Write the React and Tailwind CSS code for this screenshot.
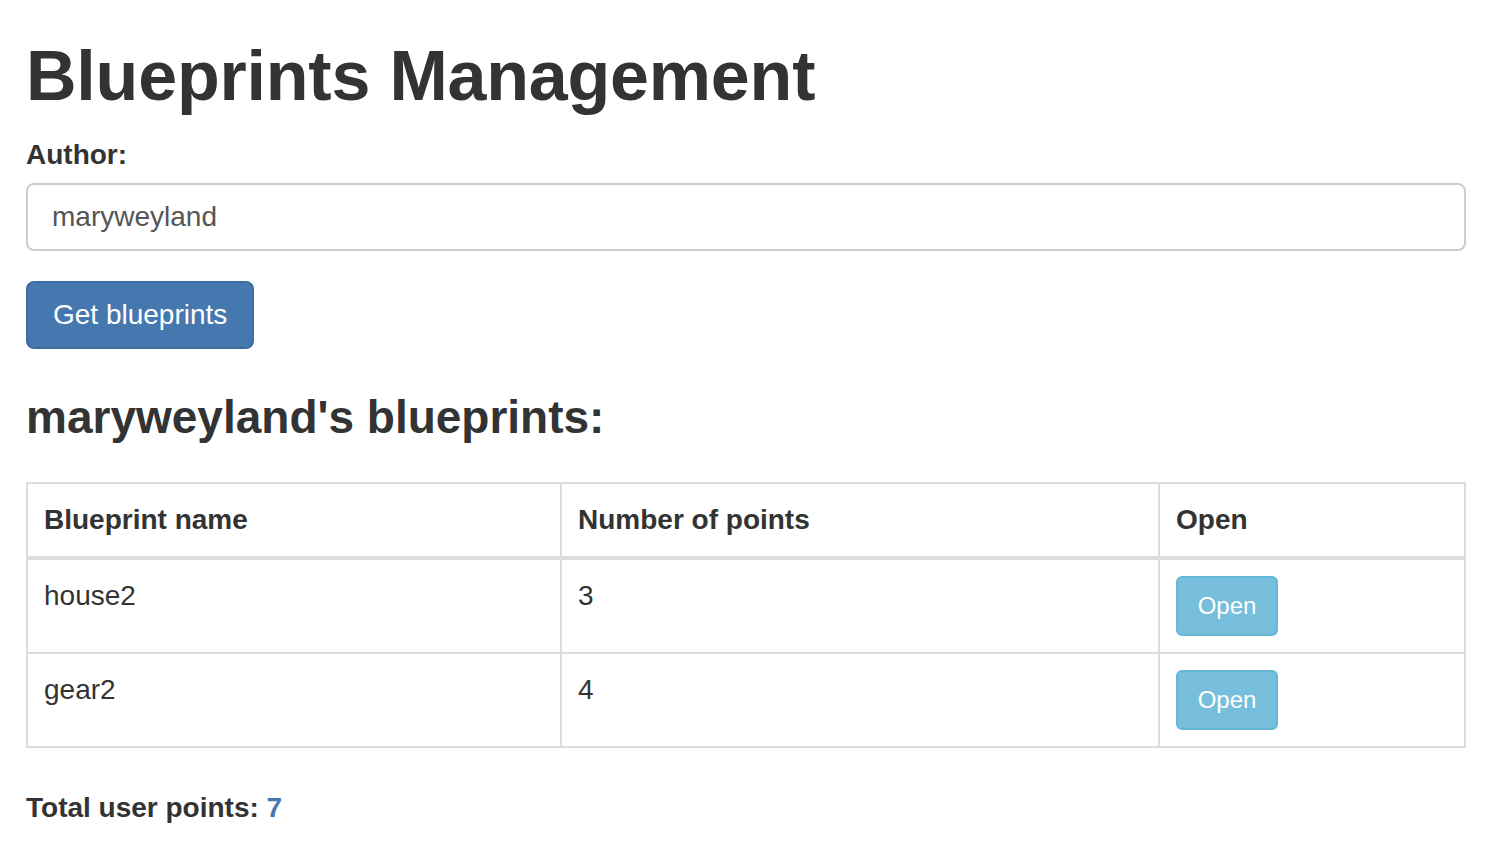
import React from 'react';

const blueprints = [
  { name: 'house2', points: 3 },
  { name: 'gear2', points: 4 },
];

const App = () => {
  const total = blueprints.reduce((sum, b) => sum + b.points, 0);

  return (
    <div className="min-h-screen bg-white pl-[26px] pr-[28px] text-[28px] leading-[40px] text-[#333]" style={{ fontFamily: '"Liberation Sans", Arial, sans-serif' }}>
      {/* Header */}
      <h1 className="pt-[38px] text-[70px] font-bold leading-[77px] tracking-[-0.2px]">Blueprints Management</h1>

      {/* Author form */}
      <label className="mt-[20px] mb-[8px] block font-bold">Author:</label>
      <input
        type="text"
        defaultValue="maryweyland"
        className="block h-[68px] w-full rounded-[8px] border-2 border-[#ccc] bg-white px-[24px] text-[28px] text-[#555] outline-none"
      />
      <button className="mt-[30px] h-[68px] rounded-[8px] border-2 border-[#3d6ca3] bg-[#4678b0] px-[25px] text-[28px] text-white">
        Get blueprints
      </button>

      {/* Results */}
      <h3 className="mt-[43px] mb-[39px] text-[46px] font-bold leading-[51px]">maryweyland's blueprints:</h3>

      <table className="w-full border-collapse border-2 border-[#ddd]">
        <thead>
          <tr>
            <th className="w-[534px] border-2 border-b-4 border-[#ddd] px-[16px] py-[16px] text-left align-bottom font-bold">Blueprint name</th>
            <th className="w-[598px] border-2 border-b-4 border-[#ddd] px-[16px] py-[16px] text-left align-bottom font-bold">Number of points</th>
            <th className="border-2 border-b-4 border-[#ddd] px-[16px] py-[16px] text-left align-bottom font-bold">Open</th>
          </tr>
        </thead>
        <tbody>
          {blueprints.map((b) => (
            <tr key={b.name}>
              <td className="border-2 border-[#ddd] px-[16px] py-[16px] align-top">{b.name}</td>
              <td className="border-2 border-[#ddd] px-[16px] py-[16px] align-top">{b.points}</td>
              <td className="border-2 border-[#ddd] px-[16px] py-[16px] align-top">
                <button className="block h-[60px] w-[102px] rounded-[6px] border-2 border-[#66b6d8] bg-[#76bedb] text-[24px] leading-[36px] text-white">
                  Open
                </button>
              </td>
            </tr>
          ))}
        </tbody>
      </table>

      <p className="mt-[40px] font-bold">
        Total user points: <span className="text-[#4678b0]">{total}</span>
      </p>
    </div>
  );
};

export default App;
